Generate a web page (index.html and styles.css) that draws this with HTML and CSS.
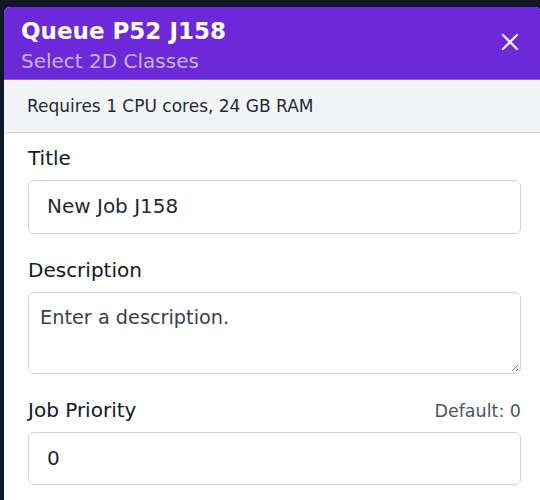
FILE: index.html
```html
<!DOCTYPE html>
<html>
<head>
<meta charset="utf-8">
<link rel="stylesheet" href="styles.css">
</head>
<body>
<div class="modal">
  <div class="header">
    <div class="titles">
      <div class="title">Queue P52 J158</div>
      <div class="subtitle">Select 2D Classes</div>
    </div>
    <button class="close" aria-label="Close">
      <svg width="18" height="18" viewBox="0 0 18 18"><path d="M2 2 L16 16 M16 2 L2 16" stroke="#ede9fe" stroke-width="2.3" stroke-linecap="round"/></svg>
    </button>
  </div>
  <div class="req">Requires 1 CPU cores, 24 GB RAM</div>
  <div class="body">
    <div class="field">
      <label class="label">Title</label>
      <div class="input">New Job J158</div>
    </div>
    <div class="field">
      <label class="label">Description</label>
      <div class="textarea">Enter a description.<span class="grip"></span></div>
    </div>
    <div class="field">
      <div class="label-row"><label class="label">Job Priority</label><span class="hint">Default: 0</span></div>
      <div class="input">0</div>
    </div>
  </div>
</div>
</body>
</html>
```
FILE: styles.css
```css
html, body { margin: 0; padding: 0; }
body {
  background: #111827;
  font-family: "DejaVu Sans", sans-serif;
  width: 540px;
  height: 500px;
  overflow: hidden;
}
.modal {
  margin: 7px 0 0 4px;
  width: 537px;
  height: 493px;
  background: #fff;
  border-radius: 6px 6px 0 0;
  overflow: hidden;
}
.header {
  background: #6d28d9;
  border-bottom: 1px solid #8b5cf6;
  height: 73px;
  box-sizing: border-box;
  padding: 10px 22px 0 17px;
  display: flex;
  justify-content: space-between;
  align-items: flex-start;
}
.title {
  color: #fff;
  font-weight: bold;
  font-size: 23px;
  line-height: 28px;
}
.subtitle {
  color: #c4b5fd;
  font-size: 20px;
  line-height: 32px;
}
.close {
  background: none;
  border: 0;
  padding: 0;
  margin: 16px 0 0 0;
  width: 18px;
  height: 18px;
  display: block;
}
.close svg { display: block; }
.req {
  background: #f3f4f6;
  border-bottom: 1px solid #d1d5db;
  height: 53px;
  box-sizing: border-box;
  padding: 16px 23px 0;
  font-size: 17px;
  line-height: 20px;
  color: #1f2937;
}
.body {
  padding: 13px 20px 0 24px;
  display: flex;
  flex-direction: column;
  gap: 24px;
}
.field { display: flex; flex-direction: column; }
.label {
  font-size: 20px;
  line-height: 24px;
  color: #111827;
  margin-bottom: 10px;
}
.label-row {
  display: flex;
  justify-content: space-between;
  align-items: baseline;
}
.hint {
  font-size: 17.5px;
  color: #4b5563;
}
.input {
  border: 1px solid #d1d5db;
  border-radius: 6px;
  height: 53.5px;
  box-sizing: border-box;
  padding: 13px 18px;
  font-size: 20px;
  line-height: 24px;
  color: #1f2937;
}
.textarea {
  position: relative;
  border: 1px solid #d1d5db;
  border-radius: 6px;
  height: 82px;
  box-sizing: border-box;
  padding: 13px 11px;
  font-size: 19.3px;
  line-height: 24px;
  color: #374151;
}
.grip {
  position: absolute;
  right: 2px;
  bottom: 2px;
  width: 6px;
  height: 6px;
  background: linear-gradient(135deg, transparent 45%, #6b7280 45%, #6b7280 55%, transparent 55%, transparent 75%, #6b7280 75%, #6b7280 85%, transparent 85%);
}
```
